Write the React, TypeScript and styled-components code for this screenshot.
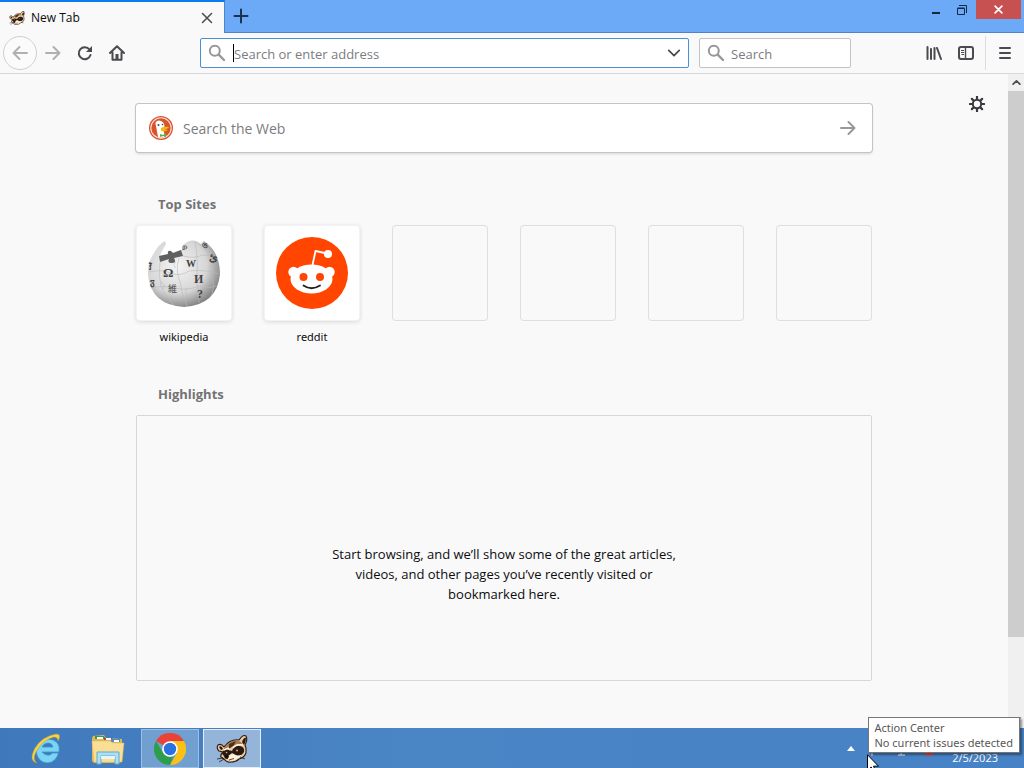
import React from "react";
import styled, { createGlobalStyle } from "styled-components";

const GlobalStyle = createGlobalStyle`
  *, *::before, *::after { box-sizing: border-box; }
  body {
    margin: 0;
    font-family: "Open Sans", "Noto Sans", sans-serif;
    font-size: 12px;
    color: #0c0c0d;
    background: #f9f9fa;
  }
  button, input { font: inherit; color: inherit; }
  button { border: 0; padding: 0; background: none; }
  svg { display: block; flex: none; }
`;

const Desktop = styled.div`
  min-height: 100vh;
  display: flex;
  flex-direction: column;
`;

const TitleBar = styled.header`
  height: 33px;
  display: flex;
  align-items: stretch;
  background: linear-gradient(#6ca9f7 0 32px, #4f84c8 32px);
`;

const Tab = styled.div`
  width: 225px;
  display: flex;
  align-items: center;
  gap: 6px;
  padding: 0 9px;
  background: #f9f9fa;
  border-top: 2px solid #0a7af0;
  border-right: 1px solid #4f84c8;
`;

const TabTitle = styled.span`
  flex: 1;
  line-height: 16px;
`;

const IconButton = styled.button`
  width: 32px;
  height: 32px;
  display: flex;
  flex: none;
  align-items: center;
  justify-content: center;
  color: #4a4a4f;
`;

const CloseTab = styled(IconButton)`
  width: 16px;
  height: 16px;
`;

const NewTab = styled(IconButton)`
  color: #1c3350;
`;

const WindowControls = styled.div`
  margin-left: auto;
  display: flex;
  align-items: flex-start;
  padding-right: 3px;
`;

const WindowButton = styled.button<{ $close?: boolean }>`
  width: ${(p) => (p.$close ? 45 : 27)}px;
  height: 19px;
  display: flex;
  align-items: center;
  justify-content: center;
  background: ${(p) => (p.$close ? "#c75050" : "transparent")};
  color: ${(p) => (p.$close ? "#fff" : "#12293f")};
`;

const Toolbar = styled.nav`
  height: 41px;
  display: flex;
  align-items: center;
  padding: 0 3px;
  background: #f9f9fa;
  border-bottom: 1px solid #d8d8da;
`;

const BackButton = styled(IconButton)`
  width: 34px;
  height: 34px;
  border: 1px solid #cfcfd1;
  border-radius: 50%;
  background: #fbfbfb;
  color: #b0b0b2;
`;

const ForwardButton = styled(IconButton)`
  color: #b0b0b2;
`;

const Spring = styled.div`
  flex: 67 1 0;
`;

const Field = styled.form<{ $focused?: boolean }>`
  height: 30px;
  display: flex;
  align-items: center;
  padding: 0 6px 0 7px;
  background: #fff;
  border: 1px solid ${(p) => (p.$focused ? "#4a90d9" : "#c3c3c5")};
  border-radius: 2px;
  color: #98989b;
`;

const AddressField = styled(Field)`
  flex: 474 1 0;
  min-width: 0;
  margin-right: 10px;
`;

const SearchField = styled(Field)`
  width: 152px;
`;

const Caret = styled.span`
  width: 1px;
  height: 18px;
  margin-left: 7px;
  background: #000;
`;

const TextInput = styled.input<{ $inset?: number }>`
  flex: 1;
  min-width: 0;
  height: 26px;
  border: 0;
  outline: 0;
  padding: 2px 0 0 ${(p) => p.$inset ?? 0}px;
  background: transparent;
  font-size: 13px;
  color: #0c0c0d;
  &::placeholder { color: #7c7c7f; opacity: 1; }
`;

const DropButton = styled(IconButton)`
  width: 16px;
  height: 26px;
`;

const Separator = styled.span`
  width: 1px;
  height: 34px;
  margin: 0 3px;
  background: #dcdcde;
`;

const Viewport = styled.div`
  flex: 1;
  display: flex;
`;

const Page = styled.main`
  flex: 1;
  display: grid;
  grid-template-columns: 1fr minmax(0, 736px) 1fr;
  padding: 30px 0 47px;
`;

const Content = styled.div`
  grid-column: 2;
  display: flex;
  flex-direction: column;
`;

const SettingsButton = styled.button`
  justify-self: end;
  align-self: start;
  width: 16px;
  height: 16px;
  margin: -8px 23px 0 0;
  color: #38383d;
`;

const WebSearch = styled.form`
  height: 48px;
  display: flex;
  align-items: center;
  padding: 0 15px 0 13px;
  background: #fff;
  border-radius: 3px;
  box-shadow: 0 0 0 1px #c4c4c6, 0 2px 3px rgba(0, 0, 0, 0.14);
`;

const WebInput = styled(TextInput)`
  height: 40px;
  padding-top: 0;
  font-size: 14px;
`;

const SubmitButton = styled(IconButton)`
  width: 18px;
  color: #98989b;
`;

const SectionTitle = styled.h2`
  margin: 0;
  padding-left: 22px;
  font-size: 13px;
  line-height: 20px;
  font-weight: 700;
  color: #737373;
`;

const TopSites = styled.section`
  margin-top: 42px;
`;

const SiteList = styled.ul`
  list-style: none;
  margin: 11px 0 0;
  padding: 0;
  display: grid;
  grid-template-columns: repeat(6, 96px);
  justify-content: space-between;
`;

const SiteLink = styled.a`
  color: inherit;
  text-decoration: none;
  text-align: center;
`;

const Tile = styled.div<{ $filled?: boolean }>`
  height: 96px;
  display: flex;
  align-items: center;
  justify-content: center;
  border-radius: 4px;
  background: ${(p) => (p.$filled ? "#fff" : "transparent")};
  box-shadow: ${(p) =>
    p.$filled
      ? "inset 0 0 0 1px rgba(12, 12, 13, 0.05), 0 1px 4px rgba(12, 12, 13, 0.14)"
      : "inset 0 0 0 1px #dfdfe1"};
`;

const SiteName = styled.div`
  margin-top: 6px;
  font-family: "Noto Sans", sans-serif;
  font-size: 11px;
  line-height: 20px;
`;

const Highlights = styled.section`
  margin-top: 37px;
  flex: 1;
  display: flex;
  flex-direction: column;
`;

const EmptyState = styled.div`
  flex: 1;
  min-height: 266px;
  margin-top: 11px;
  display: flex;
  justify-content: center;
  padding: 128px 16px 16px;
  border: 1px solid #d7d7db;
  border-radius: 2px;
`;

const EmptyText = styled.p`
  max-width: 352px;
  margin: 0;
  font-size: 13px;
  line-height: 20px;
  text-align: center;
`;

const Scrollbar = styled.div`
  width: 16px;
  display: flex;
  flex-direction: column;
  align-items: center;
  justify-content: space-between;
  background: #f0f0f0;
  color: #505050;
`;

const ScrollArrow = styled(IconButton)`
  width: 16px;
  height: 17px;
`;

const ScrollTrack = styled.div`
  flex: 1;
  width: 16px;
`;

const ScrollThumb = styled.div`
  height: 88%;
  background: #cdcdcd;
`;

const Taskbar = styled.footer`
  position: relative;
  height: 40px;
  display: flex;
  gap: 4px;
  padding: 1px 26px 0 17px;
  background: linear-gradient(90deg, #4079bb, #4a85c6 40%, #4682c5);
`;

const TaskButton = styled.button<{ $state?: "open" | "active" }>`
  width: 58px;
  height: 39px;
  display: flex;
  align-items: center;
  justify-content: center;
  background: ${(p) => (p.$state === "active" ? "#94b4d9" : p.$state === "open" ? "#709fd0" : "transparent")};
  border: 1px solid
    ${(p) => (p.$state === "active" ? "#e4eef8" : p.$state === "open" ? "#9dbfe2" : "transparent")};
`;

const Tray = styled.div`
  margin-left: auto;
  display: flex;
  align-items: center;
  color: #fff;
`;

const TrayIcons = styled.div`
  display: flex;
  align-items: center;
  gap: 12px;
  margin: 0 17px 0 16px;
`;

const Clock = styled.time`
  align-self: flex-end;
  font-size: 11px;
  line-height: 20px;
`;

const Tooltip = styled.div`
  position: absolute;
  right: 4px;
  bottom: 15px;
  padding: 2px 6px 2px 5px;
  border: 1px solid #767676;
  background: #fff;
  box-shadow: 2px 2px 2px rgba(0, 0, 0, 0.4);
  color: #575757;
  font-family: "Noto Sans", sans-serif;
  font-size: 11px;
  line-height: 15px;
  white-space: nowrap;
`;

const Pointer = styled.svg`
  position: absolute;
  right: 145px;
  bottom: -5px;
`;

const Lines = ({ d, size = 16, width = 2 }: { d: string; size?: number; width?: number }) => (
  <svg width={size} height={size} viewBox="0 0 16 16" fill="none" stroke="currentColor" strokeWidth={width} strokeLinecap="round" strokeLinejoin="round">
    <path d={d} />
  </svg>
);

const SearchGlass = () => (
  <svg width="18" height="18" viewBox="0 0 18 18" fill="none" stroke="currentColor">
    <circle cx="6.8" cy="6.8" r="5" strokeWidth="2" />
    <path d="M10.7 10.7L16 16" strokeWidth="2.4" strokeLinecap="round" />
  </svg>
);

const Raccoon = ({ size }: { size: number }) => (
  <svg width={size} height={size} viewBox="0 0 32 32">
    <path d="M8 14Q5 10 2 12Q0 15 3 18L7 19Q4 22 5 24L8 26Q11 30 15 29Q20 29 23 26Q28 25 30 20L30 15L29 12Q32 7 30 3Q27 1 23 7Q14 6 8 14Z" fill="#e9c79c" stroke="#2a1a12" strokeWidth="1.1" strokeLinejoin="round" />
    <path d="M8 15Q13 7 22 7L27 11L21 11L16 14L12 15L8 19Z" fill="#a97c52" />
    <path d="M13 11L20 8L18 12L13 16Z" fill="#4b3121" />
    <path d="M26 9Q28 4 30 5Q30 9 28 12ZM3 14Q5 12 7 16L5 17Z" fill="#2a1a12" />
    <path d="M6 20Q8 15 13 17L16 18Q18 12 24 13Q29 14 28 19Q25 24 20 22L16 20L12 23Q7 24 6 20Z" fill="#2a1a12" />
    <path d="M8 17L12 15L14 17M17 15Q20 11 27 12" stroke="#fff3df" strokeWidth="1.4" fill="none" />
    <path d="M14 22L17 21Q20 24 26 22L21 26L16 28L12 26Z" fill="#fff3df" />
    <circle cx="10.500" cy="19.500" r=".8" fill="#d9b684" />
    <circle cx="21" cy="17.500" r=".9" fill="#d9b684" />
    <path d="M8 23Q11 21 13 23.500L11.500 26L9 25.500Z" fill="#120c0a" />
    <path d="M13 27L18 25.500M7 25L1 26M8 26L3 29M24 24L29 26" stroke="#2a1a12" strokeWidth=".8" fill="none" />
  </svg>
);

const Gear = () => (
  <svg width="16" height="16" viewBox="0 0 16 16" fill="none" stroke="currentColor">
    <circle cx="8" cy="8" r="4.2" strokeWidth="2" />
    <path d="M8 .8V3M8 13V15.2M.8 8H3M13 8H15.2M2.9 2.9L4.5 4.5M11.5 11.5L13.1 13.1M2.9 13.1L4.5 11.5M11.5 4.5L13.1 2.9" strokeWidth="2.2" strokeLinecap="round" />
  </svg>
);

const Duck = () => (
  <svg width="24" height="24" viewBox="0 0 24 24">
    <circle cx="12" cy="12" r="12" fill="#d9532c" />
    <circle cx="12" cy="12" r="10.200" fill="none" stroke="#fbe3da" strokeWidth="1.100" />
    <path d="M9 21L7 10Q5 5 10 4.500Q15 5 15.500 10L14.500 14L16 20.500Q12 22.500 9 21Z" fill="#fff" />
    <path d="M12 12Q15 10 20 11Q19 13 15 13L19 14Q16 16 12 15Z" fill="#f9b90c" />
    <path d="M11 18L14 19L17 17V21L14 20L11 21Z" fill="#5fae43" />
    <circle cx="9.5" cy="9" r="1" fill="#324b66" />
    <circle cx="13.5" cy="8.5" r=".8" fill="#324b66" />
  </svg>
);

const Globe = () => (
  <svg width="76" height="76" viewBox="0 0 76 76">
    <defs>
      <radialGradient id="globe" cx="40%" cy="38%" r="64%">
        <stop offset="0" stopColor="#f4f4f4" />
        <stop offset=".65" stopColor="#d6d6d6" />
        <stop offset="1" stopColor="#858585" />
      </radialGradient>
    </defs>
    <path d="M8 18Q13 9 19 6L20 9L15 18L14 21L23 19L34 15L40 14L37 10Q43 4 50 6L55 9L58 6Q74 17 74 39Q71 70 38 72Q5 70 2 40Q1 28 8 18Z" fill="url(#globe)" />
    <path d="M13 21L22 19Q21 15 25 16L27 18L35 15L37 21L28 23Q31 28 26 28Q21 28 23 24L14 27Z" fill="#606060" />
    <g fill="none" stroke="#b9b9b9" strokeWidth=".6">
      <path d="M14 27Q12 40 15 51Q20 63 28 70M33 23Q29 35 34 47Q36 60 41 71M49 7Q53 30 50 46Q54 58 53 68M61 10Q70 25 66 41Q69 50 66 60" />
      <path d="M3 37Q18 34 24 38Q34 42 43 36Q57 34 73 39M5 53Q19 50 29 53Q41 56 53 51Q64 54 70 51M37 21Q49 24 56 20L69 21" />
      <path d="M30 33Q26 29 30 27M50 39Q54 44 50 48M15 47Q20 50 17 54M41 53Q38 57 42 61" />
    </g>
    <g fill="#444" fontFamily="Liberation Serif, serif" fontWeight="700">
      <text x="17" y="42" fontSize="13">Ω</text>
      <text x="40" y="32" fontSize="10">W</text>
      <text x="48" y="48" fontSize="12">И</text>
      <text x="22" y="57" fontSize="9" fontWeight="400" fontFamily="Noto Sans CJK JP, sans-serif">維</text>
      <text x="63" y="26" fontSize="11">ئ</text>
      <text x="51" y="63" fontSize="12">?</text>
      <text x="3" y="35" fontSize="8">វិ</text>
      <text x="4" y="50" fontSize="9">ჳ</text>
      <text x="36" y="14" fontSize="8">ற</text>
      <text x="56" y="13" fontSize="8">ঙ</text>
    </g>
  </svg>
);

const RedditMark = () => (
  <svg width="72" height="72" viewBox="0 0 72 72">
    <circle cx="36" cy="36" r="36" fill="#ff4500" />
    <path d="M36.5 28L39.5 14L51 16.500" stroke="#fff" strokeWidth="1.800" fill="none" strokeLinejoin="round" />
    <circle cx="52" cy="17" r="4" fill="#fff" />
    <circle cx="17.5" cy="35" r="5.2" fill="#fff" />
    <circle cx="53.5" cy="35" r="5.2" fill="#fff" />
    <ellipse cx="35.5" cy="42" rx="21" ry="14.500" fill="#fff" />
    <circle cx="27.5" cy="40" r="4" fill="#ff4500" />
    <circle cx="44" cy="40" r="4" fill="#ff4500" />
    <path d="M27.5 48.5Q35.5 54 44 48.5" stroke="#222" strokeWidth="1.8" fill="none" strokeLinecap="round" />
  </svg>
);

const Explorer = () => (
  <svg width="32" height="32" viewBox="0 0 32 32">
    <path d="M22.500 20Q18 25 12 19H29Q31 7 18 6Q6 7 6 18Q8 30 18 30Q26 29 28.500 20ZM12 14Q14 10 18 10Q22 10 23 14Z" fill="#7ad5f5" stroke="#3a93cb" strokeWidth=".8" />
    <path d="M7 30Q-2 28 5 15Q13 3 26 1Q32 1 28 8Q28 4 24 4Q12 7 6 19Q2 27 7 30Z" fill="#f7d34b" stroke="#b99a24" strokeWidth=".5" />
  </svg>
);

const Folder = () => (
  <svg width="34" height="32" viewBox="0 0 34 32">
    <path d="M2 3L13 2L15 5L31 6V27L29 30H3L1 28V5Z" fill="#e3b757" />
    <path d="M4 3H13L15 6H4Z" fill="#3a9a53" />
    <path d="M13 5H21L23 7H13Z" fill="#cf3c31" />
    <path d="M20 6H29V9H20Z" fill="#438ed1" />
    <path d="M6 5H12M15 6H20M23 8H28" stroke="#fff" strokeWidth="2" />
    <path d="M1 8H19L22 10H33L31 29H3Z" fill="#f8df95" stroke="#dfb95b" strokeWidth=".5" />
    <path d="M6 19H28V31H24V23H10V31H6Z" fill="#abe0f4" stroke="#65a9cb" />
    <path d="M10 23H24V26H10Z" fill="#e1f6ff" />
  </svg>
);

const Chrome = () => (
  <svg width="32" height="32" viewBox="0 0 32 32">
    <path d="M16 16L2.100 8A16 16 0 0 1 29.900 8Z" fill="#ea4335" />
    <path d="M16 8H29.900A16 16 0 0 1 16 32L22.900 20Z" fill="#fbc116" />
    <path d="M2.100 8L9.100 20Q12 24 16 24L19.500 23.200L16 32A16 16 0 0 1 2.100 8Z" fill="#2e9d4c" />
    <circle cx="16" cy="16" r="7.800" fill="#fff" />
    <circle cx="16" cy="16" r="6.200" fill="#2972df" />
  </svg>
);

const ArrowLeft = "M15 8H1.500M7.500 2L1.500 8L7.500 14";
const ArrowRight = "M1 8H14.500M8.500 2L14.500 8L8.500 14";

const sites = [
  { name: "wikipedia", href: "#wikipedia", icon: <Globe /> },
  { name: "reddit", href: "#reddit", icon: <RedditMark /> },
];
const emptySlots = 4;

export default function App() {
  return (
    <Desktop>
      <GlobalStyle />
      <TitleBar>
        <Tab>
          <Raccoon size={16} />
          <TabTitle>New Tab</TabTitle>
          <CloseTab aria-label="Close tab">
            <Lines size={12} width={2} d="M2 2L14 14M14 2L2 14" />
          </CloseTab>
        </Tab>
        <NewTab aria-label="New tab">
          <Lines size={16} width={2} d="M8 1.500V14.500M1.500 8H14.500" />
        </NewTab>
        <WindowControls>
          <WindowButton aria-label="Minimize">
            <svg width="8" height="10" viewBox="0 0 8 10"><path d="M0 7H8V9H0Z" fill="currentColor" /></svg>
          </WindowButton>
          <WindowButton aria-label="Restore">
            <svg width="11" height="10" viewBox="0 0 11 10" fill="none" stroke="currentColor">
              <path d="M.5 3.500H7.500V9.500H.5ZM.5 3H7.500M2 .5H9.500V8" />
            </svg>
          </WindowButton>
          <WindowButton $close aria-label="Close">
            <Lines size={9} width={3} d="M2 2L14 14M14 2L2 14" />
          </WindowButton>
        </WindowControls>
      </TitleBar>

      <Toolbar>
        <BackButton aria-label="Back"><Lines d={ArrowLeft} /></BackButton>
        <ForwardButton aria-label="Forward"><Lines d={ArrowRight} /></ForwardButton>
        <IconButton aria-label="Reload">
          <svg width="16" height="16" viewBox="0 0 16 16" fill="none" stroke="currentColor" strokeWidth="2">
            <path d="M13.500 10A6 6 0 1 1 12.500 4.500L13.500 6" strokeLinecap="round" />
            <path d="M15 1V7H9Z" fill="currentColor" stroke="none" />
          </svg>
        </IconButton>
        <IconButton aria-label="Home">
          <svg width="16" height="16" viewBox="0 0 16 16" fill="none" stroke="currentColor" strokeWidth="2" strokeLinecap="round" strokeLinejoin="round">
            <path d="M1 8L8 1.200L15 8M3.500 7.500V14.800H12.500V7.500" />
            <path d="M6.500 14V9H9.500V14Z" fill="currentColor" stroke="none" />
          </svg>
        </IconButton>
        <Spring />
        <AddressField $focused>
          <SearchGlass />
          <Caret />
          <TextInput aria-label="Address" placeholder="Search or enter address" />
          <DropButton type="button" aria-label="Show history">
            <Lines size={14} width={2} d="M2 5L8 11L14 5" />
          </DropButton>
        </AddressField>
        <SearchField>
          <SearchGlass />
          <TextInput $inset={6} aria-label="Search" placeholder="Search" />
        </SearchField>
        <Spring />
        <IconButton aria-label="Library">
          <svg width="16" height="16" viewBox="0 0 16 16" stroke="currentColor" strokeLinecap="round">
            <path d="M1.500 2V14M5 4V14M8.500 3V14M11 3L15 14" strokeWidth="2" />
          </svg>
        </IconButton>
        <IconButton aria-label="Sidebars">
          <svg width="16" height="16" viewBox="0 0 16 16" fill="none" stroke="currentColor">
            <rect x="1" y="2" width="14" height="12" rx="2" strokeWidth="2" />
            <path d="M7.500 2V14" strokeWidth="1.400" />
            <path d="M3 5.500H6M3 7.500H6M3.500 9.500H6" />
          </svg>
        </IconButton>
        <Separator />
        <IconButton aria-label="Menu">
          <Lines size={16} width={2} d="M3 3H13M3 8H13M3 13H13" />
        </IconButton>
      </Toolbar>

      <Viewport>
        <Page>
          <Content>
            <WebSearch>
              <Duck />
              <WebInput $inset={10} aria-label="Search the Web" placeholder="Search the Web" />
              <SubmitButton type="button" aria-label="Submit search"><Lines size={16} d={ArrowRight} /></SubmitButton>
            </WebSearch>
            <TopSites>
              <SectionTitle>Top Sites</SectionTitle>
              <SiteList>
                {sites.map((site) => (
                  <li key={site.name}>
                    <SiteLink href={site.href}>
                      <Tile $filled>{site.icon}</Tile>
                      <SiteName>{site.name}</SiteName>
                    </SiteLink>
                  </li>
                ))}
                {Array.from({ length: emptySlots }, (_, i) => (
                  <li key={i}><Tile /></li>
                ))}
              </SiteList>
            </TopSites>
            <Highlights>
              <SectionTitle>Highlights</SectionTitle>
              <EmptyState>
                <EmptyText>
                  Start browsing, and we’ll show some of the great articles, videos, and other pages you’ve recently visited or bookmarked here.
                </EmptyText>
              </EmptyState>
            </Highlights>
          </Content>
          <SettingsButton aria-label="Customize page"><Gear /></SettingsButton>
        </Page>
        <Scrollbar>
          <ScrollArrow aria-label="Scroll up"><Lines size={9} width={3} d="M2 11L8 5L14 11" /></ScrollArrow>
          <ScrollTrack><ScrollThumb /></ScrollTrack>
          <ScrollArrow aria-label="Scroll down"><Lines size={9} width={3} d="M2 5L8 11L14 5" /></ScrollArrow>
        </Scrollbar>
      </Viewport>

      <Taskbar>
        <TaskButton aria-label="Internet Explorer"><Explorer /></TaskButton>
        <TaskButton aria-label="File Explorer"><Folder /></TaskButton>
        <TaskButton $state="open" aria-label="Chrome"><Chrome /></TaskButton>
        <TaskButton $state="active" aria-label="Browser"><Raccoon size={32} /></TaskButton>
        <Tray>
          <svg width="8" height="5" viewBox="0 0 8 5"><path d="M0 5L4 0L8 5Z" fill="#fff" /></svg>
          <TrayIcons>
            <svg width="12" height="14" viewBox="0 0 12 14"><path d="M1 1V14M1 2H11V8H1Z" fill="#dce8f5" stroke="#fff" /></svg>
            <svg width="14" height="14" viewBox="0 0 14 14"><path d="M1 2H12V9H1ZM6 9V13M3 13H10" fill="none" stroke="#fff" /></svg>
            <svg width="14" height="14" viewBox="0 0 14 14"><circle cx="8" cy="8" r="6" fill="#e14a44" /><path d="M5 5L11 11M11 5L5 11" stroke="#fff" strokeWidth="1.500" /></svg>
          </TrayIcons>
          <Clock dateTime="2023-02-05">2/5/2023</Clock>
        </Tray>
        <Tooltip role="tooltip">
          Action Center
          <br />
          No current issues detected
        </Tooltip>
        <Pointer width="12" height="19" viewBox="0 0 12 19">
          <path d="M.5.8V16.500L4.200 13L6.700 18.500L9 17.500L6.500 12.200H11.500Z" fill="#fff" stroke="#000" />
        </Pointer>
      </Taskbar>
    </Desktop>
  );
}
